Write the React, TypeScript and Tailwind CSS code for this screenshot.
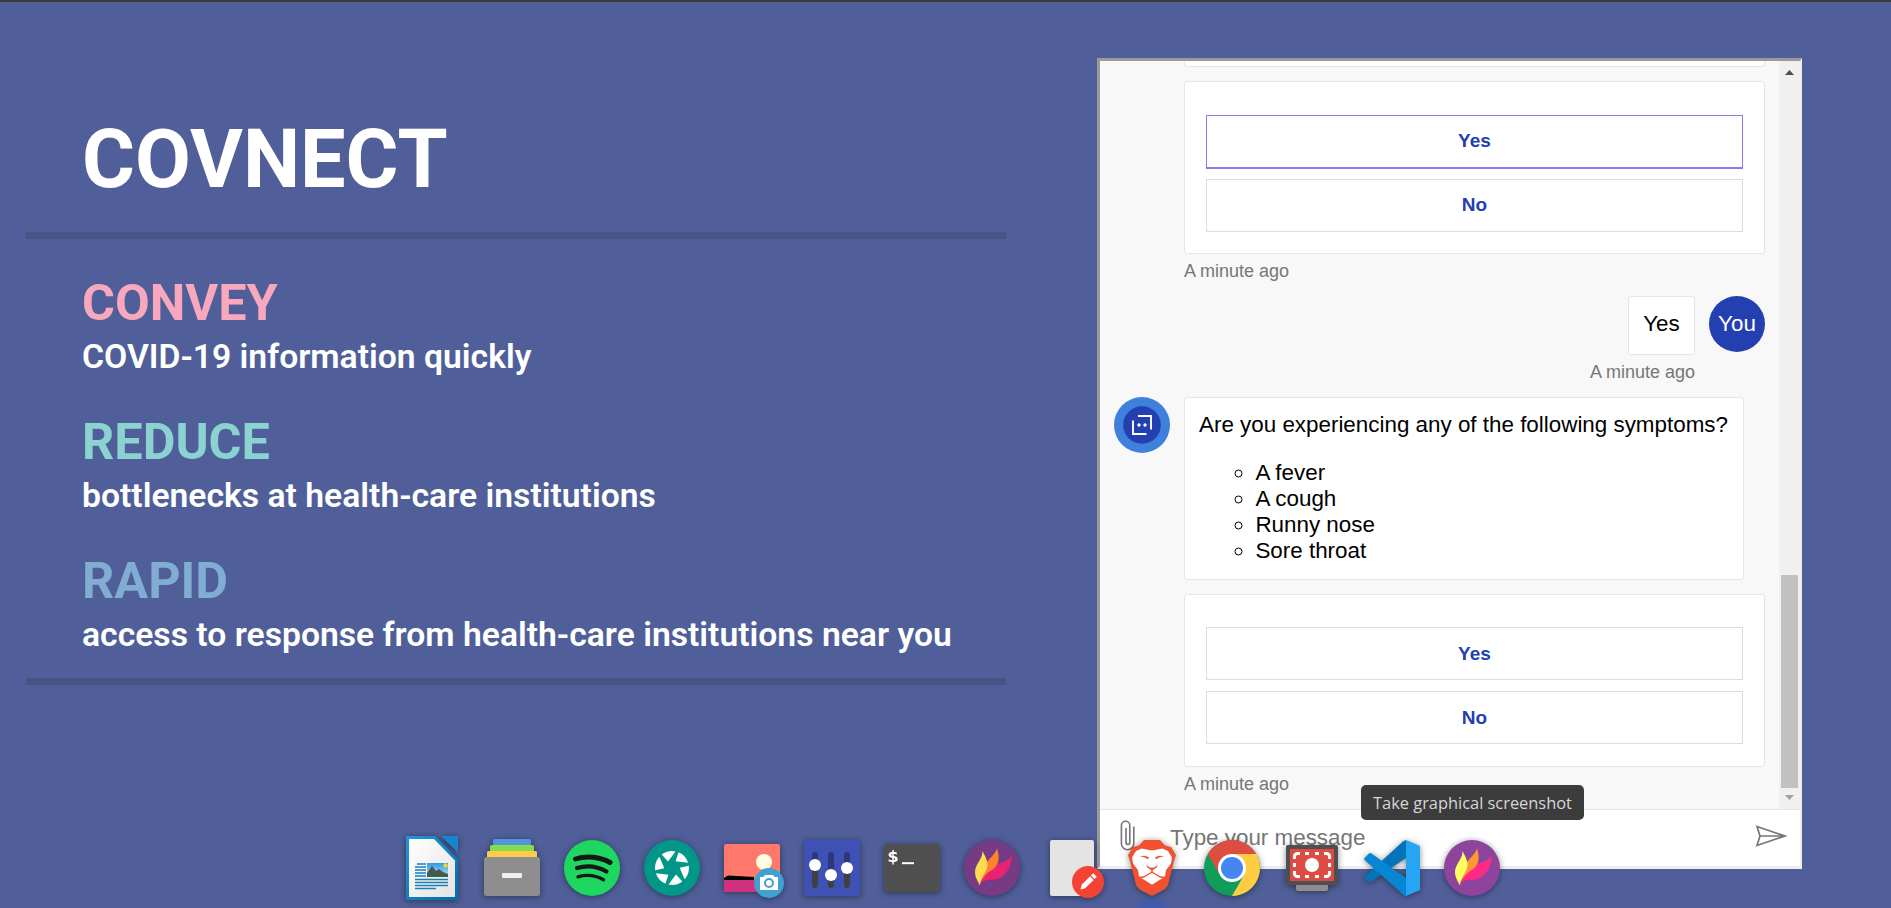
import type { ReactNode } from "react";

function Choice({ label, active, low }: { label: string; active?: boolean; low?: boolean }) {
  const frame = active
    ? "h-[54px] border border-b-2 border-[#857bf6]"
    : low
      ? "h-[53px] border border-[#dcdcdc] pt-px"
      : "h-[53px] border border-[#dcdcdc] pb-px";
  return <button className={`block w-[537px] bg-white text-[19px] font-bold text-[#233fb0] ${frame}`}>{label}</button>;
}

function Stamp({ children }: { children: ReactNode }) {
  return <div className="text-[18px] leading-[22px] text-[#767676]">{children}</div>;
}

function Chat() {
  return (
    <section className="mt-[56px] flex h-[811px] w-[705px] flex-col border-[3px] border-t-[#9a9a9a] border-r-2 border-r-[#eeeeee] border-b-[#eeeeee] border-l-[#9a9a9a] bg-white font-['Liberation_Sans',Arial,sans-serif]">
      <div className="flex h-[748px] overflow-hidden bg-[#f8f8f8]">
        <div className="flex h-full w-[679px] flex-col pl-[84px]">
          <div className="h-[6px] w-[581px] shrink-0 rounded-b-[3px] border border-t-0 border-[#e6e6e6] bg-white" />
          <div className="mt-[14px] flex h-[173px] w-[581px] shrink-0 flex-col gap-[10px] rounded-[3px] border border-[#e6e6e6] bg-white pt-[33px] pl-[21px]">
            <Choice label="Yes" active />
            <Choice label="No" />
          </div>
          <div className="mt-[6px]">
            <Stamp>A minute ago</Stamp>
          </div>
          <div className="mt-[14px] flex w-[581px] shrink-0 justify-end gap-[14px]">
            <div className="flex h-[59px] w-[67px] justify-center rounded-[3px] border border-[#e6e6e6] bg-white pt-[14px] text-[22.4px] leading-[26px] text-black">
              Yes
            </div>
            <div className="flex size-14 items-center justify-center rounded-full bg-[#233fb0] text-[22.4px] text-white">
              You
            </div>
          </div>
          <div className="mt-[6px] flex w-[511px] justify-end">
            <Stamp>A minute ago</Stamp>
          </div>
          <div className="mt-[14px] -ml-[70px] flex shrink-0 gap-[14px]">
            <svg className="size-14" viewBox="0 0 56 56">
              <circle cx="28" cy="28" r="28" fill="#3e80dc" />
              <circle cx="28" cy="28" r="18.8" fill="#233fb0" />
              <g fill="none" stroke="#fff" strokeWidth="1.9">
                <path d="M24 19h13v13.500M19 23.500V37h13.500" />
              </g>
              <circle cx="25" cy="28" r="1.7" fill="#fff" />
              <circle cx="31" cy="28" r="1.7" fill="#fff" />
            </svg>
            <div className="h-[183px] w-[560px] rounded-[3px] border border-[#e6e6e6] bg-white pt-[14px] pl-[14px] text-[22.4px] leading-[26px] text-black">
              <p className="whitespace-nowrap">Are you experiencing any of the following symptoms?</p>
              <ul className="mt-[22px] list-[circle] pl-[56.4px]">
                <li>A fever</li>
                <li>A cough</li>
                <li>Runny nose</li>
                <li>Sore throat</li>
              </ul>
            </div>
          </div>
          <div className="mt-[14px] flex h-[173px] w-[581px] shrink-0 flex-col gap-[11px] rounded-[3px] border border-[#e6e6e6] bg-white pt-[32px] pl-[21px]">
            <Choice label="Yes" low />
            <Choice label="No" low />
          </div>
          <div className="mt-[6px]">
            <Stamp>A minute ago</Stamp>
          </div>
        </div>
        <div className="flex w-[21px] flex-col items-center bg-[#f0f0f0] pt-[9px] pr-px">
          <svg className="h-[5px] w-[9px] shrink-0" viewBox="0 0 9 5">
            <path d="M0 5 4.500 0 9 5z" fill="#4d4d4d" />
          </svg>
          <div className="mt-[500px] h-[213px] w-[17px] shrink-0 bg-[#c1c1c1]" />
          <svg className="mt-[7px] h-[5px] w-[9px] shrink-0" viewBox="0 0 9 5">
            <path d="M0 0h9L4.500 5z" fill="#a0a0a0" />
          </svg>
        </div>
      </div>
      <div className="flex h-[57px] border-t border-[#e6e6e6] bg-white">
        <svg className="mt-[10px] ml-[20px] h-[32px] w-[17px] shrink-0" viewBox="0 0 17 32">
          <path
            d="M13.800 6.500V23.500a6.200 6.200 0 0 1-12.400 0V5.500a4.200 4.200 0 0 1 8.400 0V22.500a1.900 1.900 0 0 1-3.800 0V8"
            fill="none"
            stroke="#767676"
            strokeWidth="1.600"
          />
        </svg>
        <span className="mt-[15px] ml-[33px] w-[560px] text-[22.4px] leading-[26px] text-[#767676]">Type your message</span>
        <svg className="mt-[15px] ml-[25px] h-[22px] w-[32px] shrink-0" viewBox="0 0 32 22">
          <path d="M2 1.500 30 11 2 20.500 5 11zM5 11h24" fill="none" stroke="#767676" strokeWidth="1.700" />
        </svg>
      </div>
    </section>
  );
}

function Slot({ children }: { children: ReactNode }) {
  return (
    <svg
      className="h-[72px] w-20 shrink-0 overflow-visible drop-shadow-[0_1px_3px_rgba(0,0,0,0.45)]"
      viewBox="0 0 80 72"
    >
      {children}
    </svg>
  );
}

function Flame({ bg, yellow, orange, pink }: { bg: string; yellow: string; orange: string; pink: string }) {
  return (
    <Slot>
      <circle cx="40" cy="36" r="28" fill={bg} />
      <path d="M60 23.500C57 28 51 31 44 32C37 34 31 44 28.500 52C33 47 37 48 43 47.500C53 46 59 36 60 23.500z" fill={pink} />
      <path d="M45 16.500C43 23 36 27 33.500 33C31 40 29 46 27.500 52C31 46 34 41 40 38C45 34 49 29 45 16.500z" fill={orange} />
      <path d="M30.500 19C31 27 23 32 23 40C23 45 26 50 28 53.500C28 47 33 42 35 36C37 30 33 24 30.500 19z" fill={yellow} />
    </Slot>
  );
}

const BLADE = "M-10.300-13.500A17 17 0 0 1 3.500-16.600L-4-6.500z";

function Dock() {
  return (
    <nav className="absolute top-[830px] left-[392px] flex">
      <Slot>
        <defs>
          <linearGradient id="doc" x1="0" y1="0" x2="1" y2="1">
            <stop offset="0" stopColor="#2196d9" />
            <stop offset="1" stopColor="#056aa8" />
          </linearGradient>
          <linearGradient id="sky" x1="0" y1="0" x2="0" y2="1">
            <stop offset="0" stopColor="#2f9ae0" />
            <stop offset="1" stopColor="#b9e3fa" />
          </linearGradient>
          <linearGradient id="paper" x1="0" y1="0" x2="1" y2="1">
            <stop offset="0" stopColor="#fff" />
            <stop offset="1" stopColor="#e3e3e3" />
          </linearGradient>
        </defs>
        <path d="M15 4H43.500L66 27V66.500a1.500 1.500 0 0 1-1.500 1.500H15.500a1.500 1.500 0 0 1-1.500-1.500V5a1 1 0 0 1 1-1z" fill="url(#doc)" />
        <path d="M49 4H65a1 1 0 0 1 1 1V20.500z" fill="#1587cd" />
        <path d="M17 7H42L63 28.500V65H17z" fill="url(#paper)" />
        <path d="M25 32h9M23 35h11M23 38h11M23 41h11M23 44h11M23 47.500h33M23 50.500h33M23 53.500h33M23 56.500h21" stroke="#1a7fb9" strokeWidth="1.500" />
        <rect x="35" y="31" width="21" height="14" fill="url(#sky)" />
        <circle cx="53.500" cy="33.500" r="2.200" fill="#f2d629" />
        <path d="M35 45v-4l5-7 4 5 3-2 4 3 5 2v3z" fill="#4a5555" />
        <path d="M35 43h21v2H35z" fill="#39682f" />
      </Slot>
      <Slot>
        <rect x="21" y="7" width="38" height="14" rx="1.500" fill="#5294e2" />
        <rect x="18" y="13" width="44" height="14" rx="1.500" fill="#83dc4e" />
        <rect x="15" y="19" width="50" height="14" rx="1.500" fill="#ffcb4f" />
        <rect x="12" y="25" width="56" height="39" rx="2.500" fill="#8e8e8e" />
        <rect x="30" y="41" width="20" height="5" rx="1" fill="#f0f0f0" />
      </Slot>
      <Slot>
        <circle cx="40" cy="36" r="28" fill="#1ed760" />
        <g fill="none" stroke="#171717" strokeLinecap="round">
          <path d="M23.500 27C34 23.500 48 24.500 58 30.500" strokeWidth="5" />
          <path d="M25 36C35 33 46 34.500 54.500 39.500" strokeWidth="4.200" />
          <path d="M26 44.800C34 42.500 44 43.500 51.500 47.800" strokeWidth="3.400" />
        </g>
      </Slot>
      <Slot>
        <circle cx="40" cy="36" r="28" fill="#009688" />
        <g transform="translate(40 36)" fill="#fff">
          <path d={BLADE} />
          <path d={BLADE} transform="rotate(60)" />
          <path d={BLADE} transform="rotate(120)" />
          <path d={BLADE} transform="rotate(180)" />
          <path d={BLADE} transform="rotate(240)" />
          <path d={BLADE} transform="rotate(300)" />
        </g>
      </Slot>
      <Slot>
        <rect x="12" y="12" width="56" height="48" rx="2" fill="#ff786b" />
        <circle cx="52" cy="30" r="8" fill="#fffde0" />
        <path d="M12 46l4-2.500 26 1.500V49H12z" fill="#000" />
        <path d="M12 48h56v10a2 2 0 0 1-2 2H14a2 2 0 0 1-2-2z" fill="#d0307d" />
        <circle cx="57" cy="51" r="15" fill="#41a0d1" />
        <path d="M48 45h3.500l1.500-2h8l1.500 2H66v13H48z" fill="#fff" />
        <circle cx="57" cy="51" r="4" fill="none" stroke="#41a0d1" strokeWidth="2" />
      </Slot>
      <Slot>
        <rect x="12" y="8" width="56" height="56" rx="2.500" fill="#3f51b5" />
        <g strokeWidth="6" strokeLinecap="round">
          <path d="M23 23v8M39 23v18M55 23v10" stroke="#2c387e" />
          <path d="M23 33v20M39 43v10M55 36v17" stroke="#404040" />
        </g>
        <circle cx="23" cy="33" r="6" fill="#fff" />
        <circle cx="39" cy="43" r="6" fill="#fff" />
        <circle cx="55" cy="36" r="6" fill="#fff" />
      </Slot>
      <Slot>
        <rect x="12" y="12" width="56" height="48" rx="2.500" fill="#4f4f4f" />
        <text
          x="15"
          y="30"
          fill="#fff"
          textLength="12"
          lengthAdjust="spacingAndGlyphs"
          className="font-['DejaVu_Sans_Mono',monospace] text-[15px] font-bold"
        >
          $
        </text>
        <path d="M30 31.200h12" stroke="#fff" strokeWidth="2" />
      </Slot>
      <Flame bg="#773b85" yellow="#ffdc4f" orange="#ff842b" pink="#ea2272" />
      <Slot>
        <rect x="18" y="8" width="44" height="56" rx="2" fill="#e4e4e4" />
        <circle cx="56" cy="50" r="16" fill="#f44336" />
        <g fill="#fff" transform="translate(56 50) rotate(45)">
          <path d="M-2.500-5.500h5V6.500L0 10.500-2.500 6.500z" />
          <path d="M-2.500-10h5v3.300h-5z" />
        </g>
      </Slot>
      <Slot>
        <path d="M32 8H48L53 13.500 59 15 64 23 62 29 56 53C54 58 47 60 40 64C33 60 26 58 24 53L18 29 16 23 21 15 27 13.500z" fill="#f1512f" />
        <path
          d="M29.500 16.500 40 18.500 50.500 16.500 56 19 60 25.500 59 31.500 54 38 53 44.500 40 52.800 27 44.500 26 38 21 31.500 20 25.500 24 19z"
          fill="#fff"
        />
        <path d="M28 24.500C31 23 34.500 23.500 37.300 25.800L35.500 27.200C33.500 25.300 31 25 28 24.500zM52 24.500C49 23 45.500 23.500 42.700 25.800L44.500 27.200C46.500 25.300 49 25 52 24.500z" fill="#f1512f" />
        <path d="M34 33 38 35.500h4L46 33 44.500 35.800 40.800 38 40.600 40h-1.200L39.200 38 35.500 35.800z" fill="#f1512f" />
        <path d="M26.500 45.500 31.500 45 40 40.300 48.500 45 53.500 45.500" fill="none" stroke="#f1512f" strokeWidth="1.300" />
      </Slot>
      <Slot>
        <circle cx="40" cy="36" r="28" fill="#109d58" />
        <path d="M15.800 22A28 28 0 0 1 64.200 22H40L27.900 43z" fill="#dd4e40" />
        <path d="M64.200 22A28 28 0 0 1 40 64L52.100 43 40 22z" fill="#ffcd42" />
        <circle cx="40" cy="36" r="14" fill="#fff" />
        <circle cx="40" cy="36" r="11" fill="#4486f4" />
      </Slot>
      <Slot>
        <rect x="24" y="50" width="32" height="9" rx="2" fill="#8e8e8e" />
        <rect x="14" y="13" width="52" height="40" rx="2" fill="#4f4f4f" />
        <rect x="18" y="17" width="44" height="32" fill="#dd4c43" />
        <circle cx="40" cy="33" r="7" fill="#fff" />
        <path
          d="M28 21.500h-2.500a3 3 0 0 0-3 3V27M52 21.500h2.500a3 3 0 0 1 3 3V27M28 44.500h-2.500a3 3 0 0 1-3-3V39M52 44.500h2.500a3 3 0 0 0 3-3V39M33 21.500h4M43 21.500h4M33 44.500h4M43 44.500h4M22.500 31v4M57.500 31v4"
          fill="none"
          stroke="#fff"
          strokeWidth="3"
        />
      </Slot>
      <Slot>
        <path d="M54 8V26L18 50.500 12.800 46.500a1.500 1.500 0 0 1 0-2.200L51 9.500z" fill="#0473b9" />
        <path d="M12.500 26 17 21.500a2 2 0 0 1 2.500 0L54 46V64a4 4 0 0 1-3-1.500L12.500 28a1.500 1.500 0 0 1 0-2z" fill="#0787d3" />
        <path d="M54 8 68 14V58L54 64z" fill="#25a5f2" />
      </Slot>
      <Flame bg="#8e449c" yellow="#ffff62" orange="#ff9832" pink="#ff2a88" />
    </nav>
  );
}

function Pillar({ title, tone, text }: { title: string; tone: string; text: string }) {
  return (
    <div>
      <h2 className={`text-[50.4px] leading-[61px] font-bold ${tone}`}>{title}</h2>
      <p className="mt-px text-[33.7px] leading-[46px] font-semibold whitespace-nowrap text-white">{text}</p>
    </div>
  );
}

export default function App() {
  return (
    <main className="relative flex h-[908px] w-[1891px] overflow-hidden border-t-2 border-[#3c3c3c] bg-[#505f99]">
      <section className="w-[1097px] pt-[110px] pl-[26px] font-[Roboto,sans-serif]">
        <h1 className="pl-[56px] text-[81px] leading-[96px] font-bold text-white">COVNECT</h1>
        <hr className="mt-[24px] h-[7px] w-[980px] border-0 bg-[#475584]" />
        <div className="flex h-[439px] flex-col gap-[31px] pt-[33px] pl-[56px]">
          <Pillar title="CONVEY" tone="text-[#f7a8bd]" text="COVID-19 information quickly" />
          <Pillar title="REDUCE" tone="text-[#8bd3d0]" text="bottlenecks at health-care institutions" />
          <Pillar title="RAPID" tone="text-[#80add1]" text="access to response from health-care institutions near you" />
        </div>
        <hr className="h-[7px] w-[980px] border-0 bg-[#475584]" />
      </section>
      <Chat />
      <div className="absolute bottom-0 left-[1138px] h-[7px] w-[28px] rounded-t-full bg-[#2c55cf] opacity-60 blur-[3px]" />
      <Dock />
      <div className="absolute top-[783px] left-[1361px] flex h-[35px] w-[223px] items-center justify-center rounded-[5px] bg-[#3c3c3c] pt-[2px] font-['Open_Sans',sans-serif] text-[16.4px] text-[#d6d6d6]">
        Take graphical screenshot
      </div>
    </main>
  );
}
